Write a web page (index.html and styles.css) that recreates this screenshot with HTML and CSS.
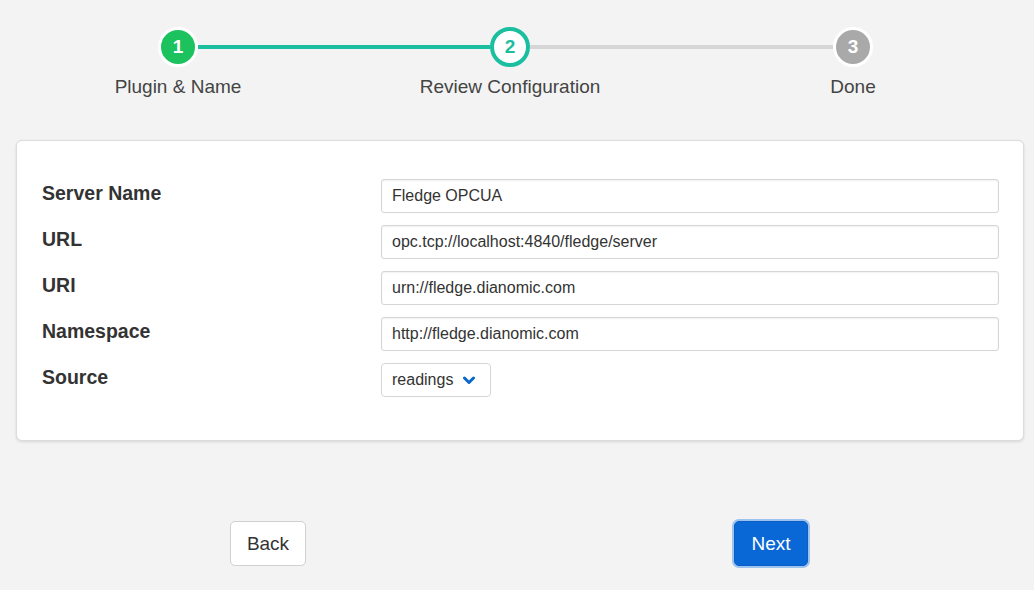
FILE: index.html
```html
<!DOCTYPE html>
<html>
<head>
<meta charset="utf-8">
<link rel="stylesheet" href="styles.css">
</head>
<body>
<div class="page">
  <div class="stepper">
    <div class="circle done">1</div>
    <div class="connector c1 active"></div>
    <div class="circle current">2</div>
    <div class="connector c2"></div>
    <div class="circle todo">3</div>
  </div>
  <div class="step-labels">
    <div class="step-label l1">Plugin &amp; Name</div>
    <div class="step-label l2">Review Configuration</div>
    <div class="step-label l3">Done</div>
  </div>

  <div class="card">
    <div class="row">
      <div class="label">Server Name</div>
      <div class="input">Fledge OPCUA</div>
    </div>
    <div class="row">
      <div class="label">URL</div>
      <div class="input">opc.tcp://localhost:4840/fledge/server</div>
    </div>
    <div class="row">
      <div class="label">URI</div>
      <div class="input">urn://fledge.dianomic.com</div>
    </div>
    <div class="row">
      <div class="label">Namespace</div>
      <div class="input">http://fledge.dianomic.com</div>
    </div>
    <div class="row">
      <div class="label">Source</div>
      <div class="select">
        <span>readings</span>
        <svg class="chev" width="12" height="9" viewBox="0 0 12 9"><path d="M1.5 2 L6 6.5 L10.5 2" fill="none" stroke="#0a68c8" stroke-width="3" stroke-linecap="round" stroke-linejoin="round"/></svg>
      </div>
    </div>
  </div>

  <div class="buttons">
    <div class="btn back">Back</div>
    <div class="btn next">Next</div>
  </div>
</div>
</body>
</html>
```

FILE: styles.css
```css
html, body {
  margin: 0;
  padding: 0;
  background: #f3f3f3;
  font-family: "Liberation Sans", Arial, sans-serif;
}
.page {
  width: 1034px;
  height: 590px;
  overflow: hidden;
}
.stepper {
  display: flex;
  align-items: center;
  padding-top: 27px;
  padding-left: 158px;
  height: 40px;
}
.circle {
  box-sizing: border-box;
  width: 40px;
  height: 40px;
  border-radius: 50%;
  display: flex;
  align-items: center;
  justify-content: center;
  font-weight: bold;
  font-size: 19px;
  flex: none;
}
.circle.done {
  background: #1cc25e;
  border: 3px solid #fff;
  color: #fff;
}
.circle.current {
  background: #fff;
  border: 4px solid #1bbf9f;
  color: #1bbf9f;
}
.circle.todo {
  background: #a9a9a9;
  border: 3px solid #fff;
  color: #fff;
}
.connector {
  height: 4px;
  background: #d6d6d6;
  flex: none;
}
.connector.active { background: #1bbf9f; }
.c1 { width: 292px; }
.c2 { width: 303px; }

.step-labels {
  display: flex;
  margin-top: 9px;
}
.step-label {
  width: 220px;
  text-align: center;
  font-size: 19px;
  color: #444;
  line-height: 22px;
  flex: none;
}
.l1 { margin-left: 68px; }
.l2 { margin-left: 112px; }
.l3 { margin-left: 123px; }

.card {
  margin: 42px 10px 0 16px;
  box-sizing: border-box;
  height: 301px;
  background: #fff;
  border: 1px solid #dcdcdc;
  border-radius: 6px;
  box-shadow: 0 1px 3px rgba(0,0,0,0.12);
  padding: 38px 24px 0 25px;
  display: flex;
  flex-direction: column;
  gap: 12px;
}
.row {
  display: flex;
  align-items: center;
  height: 34px;
}
.label {
  width: 339px;
  flex: none;
  font-weight: bold;
  font-size: 19.5px;
  color: #333;
  margin-bottom: 5px;
}
.input, .select {
  box-sizing: border-box;
  height: 34px;
  border: 1px solid #d5d5d5;
  border-radius: 3px;
  box-shadow: inset 0 1px 2px rgba(0,0,0,0.06);
  padding-left: 10px;
  display: flex;
  align-items: center;
  font-size: 16px;
  color: #333;
}
.input { flex: 1; }
.select {
  width: 110px;
  border-radius: 4px;
  box-shadow: none;
  gap: 0;
}
.select span { width: 71px; }
.chev { display: block; }

.buttons {
  display: flex;
  margin-top: 80px;
  padding-left: 230px;
}
.btn {
  box-sizing: border-box;
  height: 45px;
  width: 76px;
  border-radius: 5px;
  display: flex;
  align-items: center;
  justify-content: center;
  font-size: 19px;
}
.back {
  background: #fff;
  border: 1px solid #d0d0d0;
  color: #333;
}
.next {
  margin-left: 428px;
  background: #0a68d6;
  color: #fff;
  border: 1px solid #0a5fc4;
  box-shadow: 0 0 0 2px #9cc3f0;
  width: 74px;
}
```
